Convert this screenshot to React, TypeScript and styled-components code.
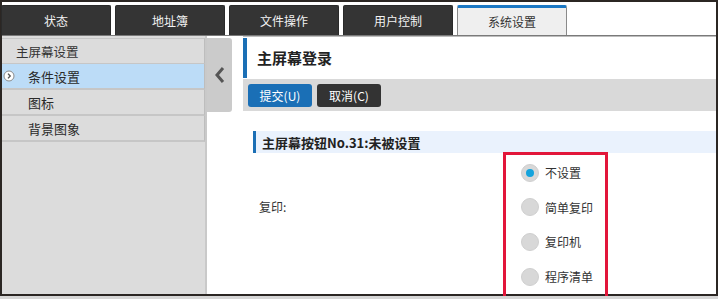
import styled, { createGlobalStyle } from 'styled-components';

const GlobalStyle = createGlobalStyle`
  html, body {
    margin: 0;
    padding: 0;
    background: #d6d6d6;
  }
  body {
    font-family: 'Noto Sans CJK SC', 'Noto Sans', sans-serif;
  }
`;

const tabs = ['状态', '地址簿', '文件操作', '用户控制', '系统设置'];
const activeTab = 4;

const menu = [
  { label: '条件设置', selected: true },
  { label: '图标', selected: false },
  { label: '背景图象', selected: false },
];

const options = ['不设置', '简单复印', '复印机', '程序清单'];

const App = () => (
  <>
    <GlobalStyle />
    <Frame>
      <TabBar>
        {tabs.map((t, i) => (
          <Tab key={t} $active={i === activeTab}>
            {t}
          </Tab>
        ))}
      </TabBar>
      <Body>
        <Sidebar>
          <MenuHeader>主屏幕设置</MenuHeader>
          {menu.map((m) => (
            <MenuItem key={m.label} $selected={m.selected}>
              {m.selected && (
                <MenuIcon viewBox="0 0 12 12">
                  <circle cx="6" cy="6" r="5" fill="#fff" stroke="#8a8a8a" strokeWidth="1" />
                  <path d="M5 3.6 L7.2 6 L5 8.4" fill="none" stroke="#555" strokeWidth="1.4" />
                </MenuIcon>
              )}
              {m.label}
            </MenuItem>
          ))}
        </Sidebar>
        <CollapseColumn>
          <CollapseButton>
            <svg width="12" height="18" viewBox="0 0 12 18">
              <path d="M9 2 L3 9 L9 16" fill="none" stroke="#555" strokeWidth="3" />
            </svg>
          </CollapseButton>
        </CollapseColumn>
        <Main>
          <PageTitle>主屏幕登录</PageTitle>
          <Toolbar>
            <Button $primary>提交(U)</Button>
            <Button>取消(C)</Button>
          </Toolbar>
          <SectionTitle>主屏幕按钮No.31:未被设置</SectionTitle>
          <FormRow>
            <FieldLabel>复印:</FieldLabel>
            <RadioGroup>
              {options.map((o, i) => (
                <RadioRow key={o}>
                  <RadioCircle $checked={i === 0} />
                  {o}
                </RadioRow>
              ))}
            </RadioGroup>
          </FormRow>
        </Main>
      </Body>
    </Frame>
  </>
);

export default App;

const Frame = styled.div`
  width: 718px;
  height: 296px;
  box-sizing: border-box;
  border: 2px solid #2b2623;
  background: #fff;
  display: flex;
  flex-direction: column;
`;

const TabBar = styled.div`
  height: 34px;
  box-sizing: border-box;
  display: flex;
  align-items: flex-end;
  gap: 4px;
  padding-top: 4px;
  background: #fff;
  border-bottom: 1px solid #7a7a7a;
  box-shadow: 0 1px 0 #bdbdbd;
`;

const Tab = styled.div<{ $active?: boolean }>`
  width: 110px;
  height: 30px;
  box-sizing: border-box;
  display: flex;
  align-items: center;
  justify-content: center;
  font-size: 12px;
  border-radius: 2px 2px 0 0;
  color: ${({ $active }) => ($active ? '#333' : '#f2f2f2')};
  background: ${({ $active }) => ($active ? '#efefef' : '#343434')};
  border: 1px solid ${({ $active }) => ($active ? '#8a8a8a' : '#2a2a2a')};
  border-bottom: none;
  border-top: ${({ $active }) => ($active ? '3px solid #1b78c4' : '1px solid #2a2a2a')};
  &:first-child {
    margin-left: -1px;
  }
`;

const Body = styled.div`
  flex: 1;
  display: flex;
  min-height: 0;
`;

const Sidebar = styled.div`
  width: 205px;
  box-sizing: border-box;
  background: #dcdcdc;
  border-right: 2px solid #c9c9c9;
  padding-top: 2px;
`;

const MenuHeader = styled.div`
  height: 26px;
  box-sizing: border-box;
  display: flex;
  align-items: center;
  padding-left: 14px;
  font-size: 12.5px;
  color: #333;
  border-top: 1px solid #c6c6c6;
  border-bottom: 1px solid #c6c6c6;
  border-right: 1px solid #bdbdbd;
`;

const MenuItem = styled.div<{ $selected?: boolean }>`
  position: relative;
  height: 26px;
  box-sizing: border-box;
  display: flex;
  align-items: center;
  padding-left: 26px;
  font-size: 13px;
  color: #2a2a2a;
  background: ${({ $selected }) => ($selected ? '#bcdcf7' : '#dcdcdc')};
  border-bottom: 2px solid #c6c6c6;
  border-right: 1px solid #bdbdbd;
`;

const MenuIcon = styled.svg`
  position: absolute;
  left: 1px;
  top: 6px;
  width: 12px;
  height: 12px;
`;

const CollapseColumn = styled.div`
  width: 36px;
  padding-top: 2px;
  background: #fff;
`;

const CollapseButton = styled.div`
  width: 25px;
  height: 74px;
  background: #cbcbcb;
  border-radius: 0 3px 3px 0;
  display: flex;
  align-items: center;
  justify-content: center;
`;

const Main = styled.div`
  flex: 1;
  padding-top: 2px;
  display: flex;
  flex-direction: column;
`;

const PageTitle = styled.div`
  height: 40px;
  display: flex;
  align-items: center;
  padding-left: 10px;
  border-left: 4px solid #1b6fb5;
  font-size: 15px;
  font-weight: bold;
  color: #222;
`;

const Toolbar = styled.div`
  height: 33px;
  box-sizing: border-box;
  background: #d9d9d9;
  display: flex;
  align-items: center;
  gap: 5px;
  padding-left: 5px;
  margin-top: 1px;
`;

const Button = styled.div<{ $primary?: boolean }>`
  width: 64px;
  height: 23px;
  border-radius: 3px;
  display: flex;
  align-items: center;
  justify-content: center;
  font-size: 12px;
  color: #fff;
  background: ${({ $primary }) => ($primary ? '#1a6fb6' : '#333')};
`;

const SectionTitle = styled.div`
  margin: 20px 0 0 10px;
  height: 22px;
  display: flex;
  align-items: center;
  padding-left: 6px;
  border-left: 3px solid #1b6fb5;
  background: #eaf2fd;
  font-size: 13px;
  font-weight: bold;
  color: #222;
`;

const FormRow = styled.div`
  display: flex;
  padding-left: 16px;
`;

const FieldLabel = styled.div`
  width: 262px;
  padding-top: 45px;
  font-size: 12px;
  color: #333;
`;

const RadioGroup = styled.div`
  position: relative;
  display: flex;
  flex-direction: column;
  padding-top: 2px;
  &::after {
    content: '';
    position: absolute;
    left: -18px;
    top: -1px;
    width: 105px;
    height: 148px;
    box-sizing: border-box;
    border: 3px solid #e2163a;
  }
`;

const RadioRow = styled.div`
  height: 34.7px;
  display: flex;
  align-items: center;
  gap: 6px;
  font-size: 12px;
  color: #333;
`;

const RadioCircle = styled.span<{ $checked?: boolean }>`
  width: 18px;
  height: 18px;
  box-sizing: border-box;
  border-radius: 50%;
  background: #d8d8d8;
  border: 1px solid #cfcfcf;
  position: relative;
  &::after {
    content: '';
    display: ${({ $checked }) => ($checked ? 'block' : 'none')};
    position: absolute;
    left: 4px;
    top: 4px;
    width: 8px;
    height: 8px;
    border-radius: 50%;
    background: #14a3dc;
  }
`;
